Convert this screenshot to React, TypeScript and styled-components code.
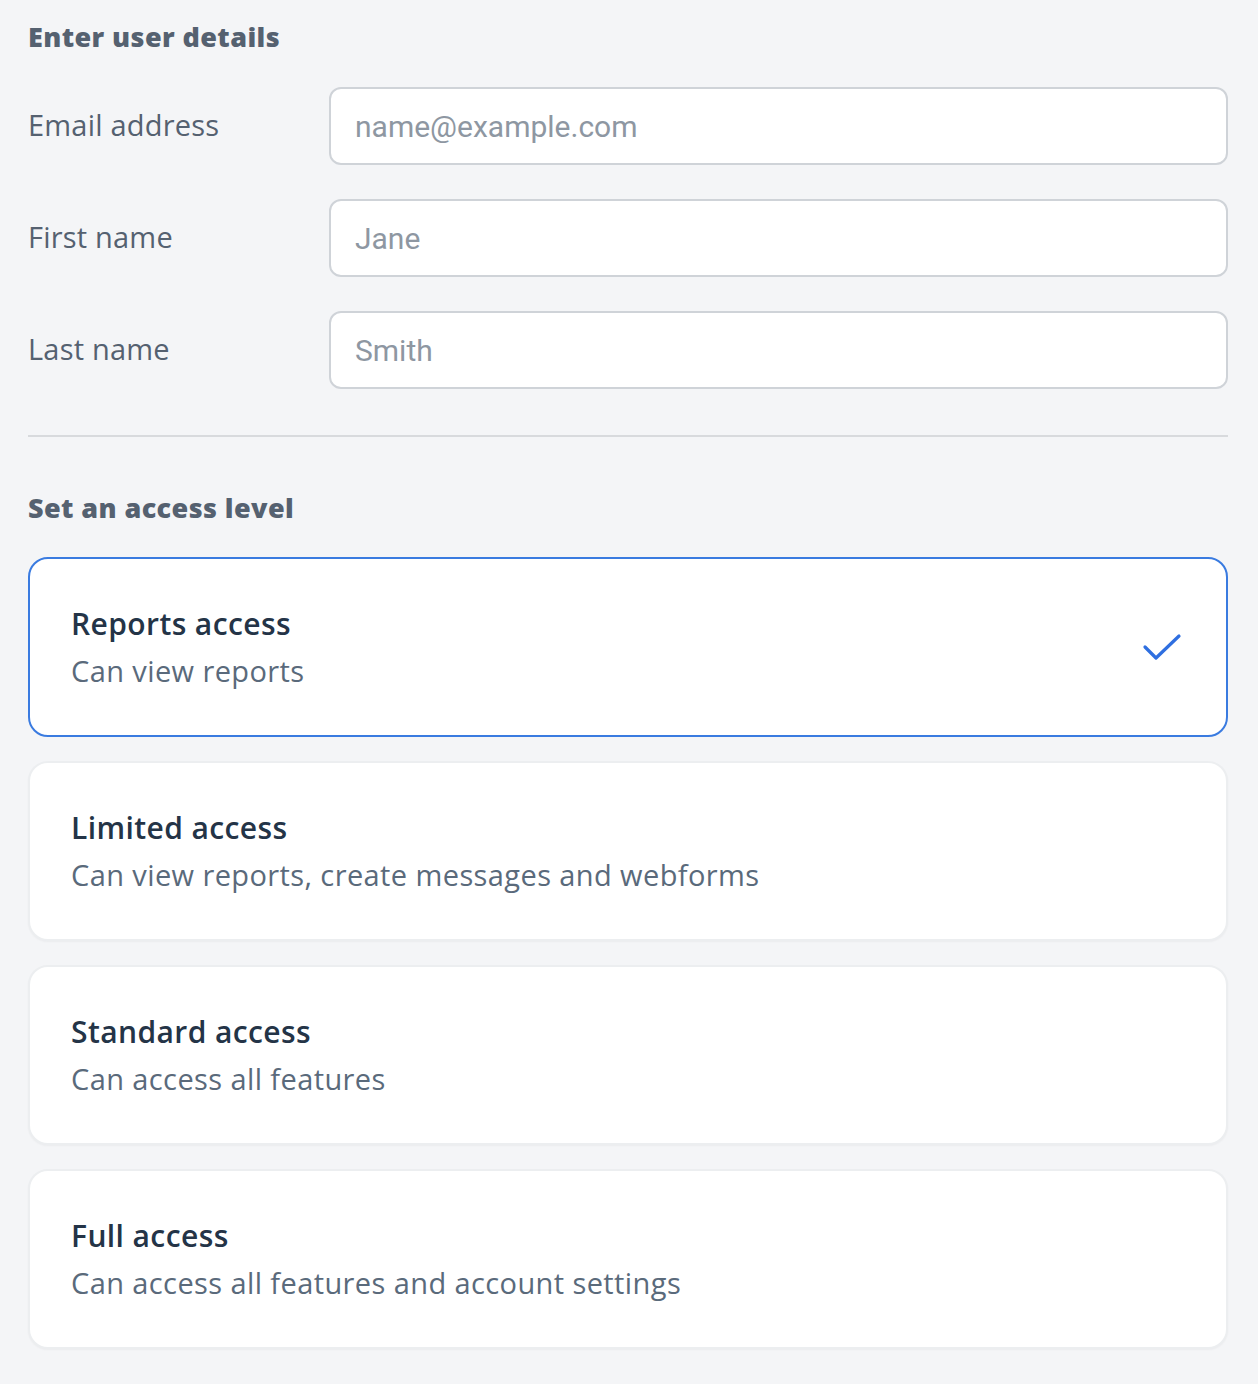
import React from "react";
import styled, { createGlobalStyle } from "styled-components";

const Global = createGlobalStyle`
  html, body { margin: 0; padding: 0; background: #f4f5f7; }
  body { font-family: "Open Sans", "Noto Sans", sans-serif; }
  * { box-sizing: border-box; }
`;

const Page = styled.div`
  padding: 18px 30px 34px 28px;
  display: flex;
  flex-direction: column;
`;

const SectionTitle = styled.h2<{ $top?: number }>`
  margin: ${(p) => p.$top ?? 0}px 0 0 0;
  font-family: "Open Sans", sans-serif;
  font-weight: 800;
  font-size: 27px;
  line-height: 38px;
  color: #556170;
  letter-spacing: 0.4px;
`;

const Fields = styled.div`
  display: flex;
  flex-direction: column;
  gap: 34px;
  margin-top: 31px;
`;

const FieldRow = styled.label`
  display: grid;
  grid-template-columns: 301px 1fr;
  align-items: center;
`;

const FieldLabel = styled.span`
  font-size: 29px;
  color: #556170;
  letter-spacing: 0.2px;
  transform: translateY(-2px);
`;

const Input = styled.input`
  height: 78px;
  width: 100%;
  border: 2px solid #cfd3d8;
  border-radius: 12px;
  background: #fff;
  padding: 0 24px;
  font-family: Roboto, sans-serif;
  font-size: 30px;
  color: #333;
  outline: none;
  &::placeholder { color: #8e97a2; }
`;

const Divider = styled.hr`
  border: none;
  height: 2px;
  background: #d8dadd;
  margin: 46px 0 0 0;
`;

const Cards = styled.div`
  display: flex;
  flex-direction: column;
  gap: 24px;
  margin-top: 30px;
`;

const Card = styled.div<{ $selected?: boolean }>`
  height: 180px;
  border-radius: 20px;
  background: #fff;
  border: 2px solid ${(p) => (p.$selected ? "#3a7be0" : "#eceef0")};
  box-shadow: ${(p) => (p.$selected ? "none" : "0 1px 2px rgba(0,0,0,0.04)")};
  display: flex;
  align-items: center;
  justify-content: space-between;
  padding: 0 42px 0 41px;
`;

const CardText = styled.div`
  display: flex;
  flex-direction: column;
  gap: 6px;
`;

const CardTitle = styled.div`
  font-size: 30px;
  font-weight: 600;
  color: #243447;
  line-height: 42px;
  letter-spacing: 0.4px;
`;

const CardDesc = styled.div`
  font-size: 29px;
  color: #5a6a7b;
  line-height: 40px;
  letter-spacing: 0.4px;
`;

const Check = () => (
  <svg width="44" height="32" viewBox="0 0 44 32" fill="none">
    <path d="M5 16 L16 27 L39 5" stroke="#2f6fe0" strokeWidth="3.2" strokeLinecap="round" strokeLinejoin="round" />
  </svg>
);

const fields = [
  { label: "Email address", placeholder: "name@example.com" },
  { label: "First name", placeholder: "Jane" },
  { label: "Last name", placeholder: "Smith" },
];

const levels = [
  { title: "Reports access", desc: "Can view reports", selected: true },
  { title: "Limited access", desc: "Can view reports, create messages and webforms" },
  { title: "Standard access", desc: "Can access all features" },
  { title: "Full access", desc: "Can access all features and account settings" },
];

export default function App() {
  return (
    <>
      <Global />
      <Page>
        <SectionTitle>Enter user details</SectionTitle>
        <Fields>
          {fields.map((f) => (
            <FieldRow key={f.label}>
              <FieldLabel>{f.label}</FieldLabel>
              <Input placeholder={f.placeholder} />
            </FieldRow>
          ))}
        </Fields>
        <Divider />
        <SectionTitle $top={52}>Set an access level</SectionTitle>
        <Cards>
          {levels.map((l) => (
            <Card key={l.title} $selected={l.selected}>
              <CardText>
                <CardTitle>{l.title}</CardTitle>
                <CardDesc>{l.desc}</CardDesc>
              </CardText>
              {l.selected && <Check />}
            </Card>
          ))}
        </Cards>
      </Page>
    </>
  );
}
